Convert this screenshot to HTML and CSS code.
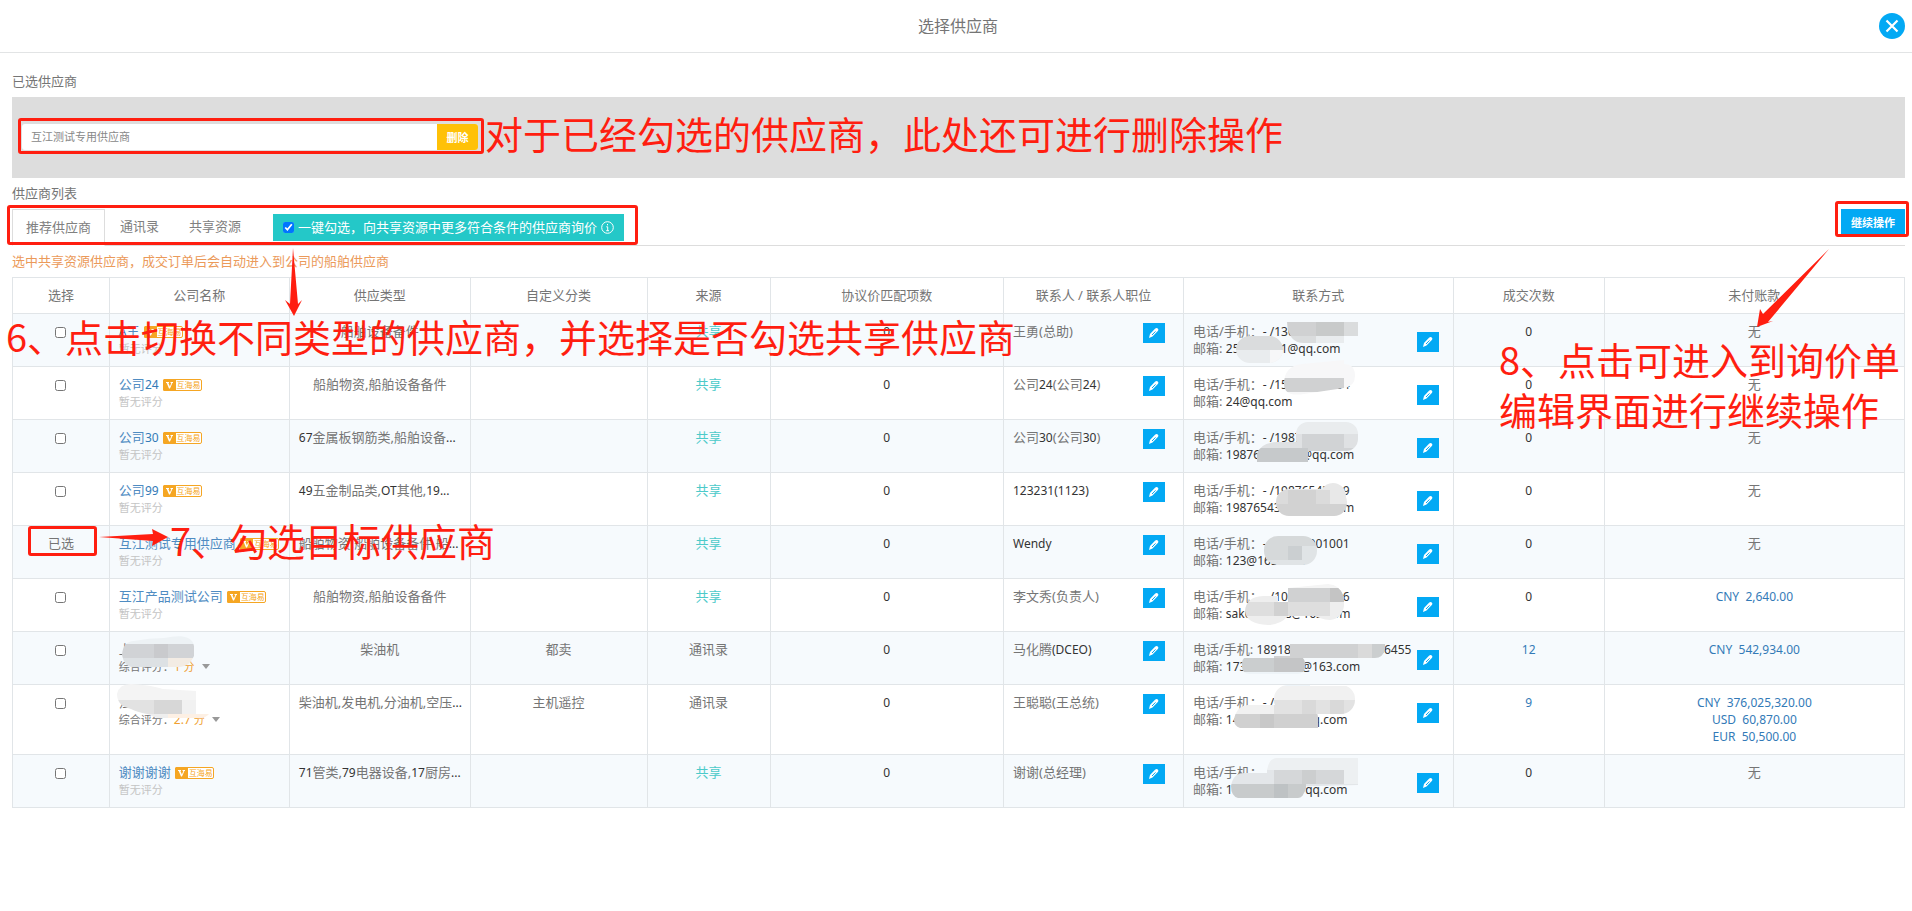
FILE: index.html
```html
<!DOCTYPE html>
<html lang="zh-CN">
<head>
<meta charset="utf-8">
<title>选择供应商</title>
<link rel="stylesheet" href="styles.css">
</head>
<body>
<svg class="defs" width="0" height="0" aria-hidden="true">
  <symbol id="pen" viewBox="0 0 12 12">
    <path d="M1 11l1-4 5-5.300c1-1 2-1 2.800-.2s.8 1.800-.2 2.800L4.500 9.600z" fill="#fff"/>
    <path d="M4 8l3.500-3.600" stroke="#03a9f4" stroke-width="1"/>
  </symbol>
  <symbol id="badge" viewBox="0 0 39 12">
    <rect x=".5" y=".5" width="38" height="11" rx="1.500" fill="#fff" stroke="#f5a623"/>
    <path d="M0 1.500Q0 0 1.500 0H13v12H1.500Q0 12 0 10.500z" fill="#f5a623"/>
    <path d="M3 3h3v1h-.6l1.500 3.600L8.300 4h-.8V3H10v1h-.6L7 9.500H6L3.700 4H3z" fill="#fff"/>
  </symbol>
</svg>
<div class="page">
  <header class="top">
    <h1>选择供应商</h1>
    <button class="close" aria-label="关闭"><svg width="14" height="14" viewBox="0 0 14 14"><path d="M1.500 1.500l11 11M12.500 1.500l-11 11" stroke="#fff" stroke-width="2.200"/></svg></button>
  </header>
  <main>
    <h2>已选供应商</h2>
    <section class="chosen">
      <div class="chosen-item"><span>互江测试专用供应商</span><button>删除</button></div>
    </section>
    <h2>供应商列表</h2>
    <nav class="tabs">
      <a class="tab active" href="#t1">推荐供应商</a>
      <a class="tab" href="#t2">通讯录</a>
      <a class="tab" href="#t3">共享资源</a>
      <label class="quick"><input type="checkbox" checked><span>一键勾选，向共享资源中更多符合条件的供应商询价</span>
        <svg width="13" height="13" viewBox="0 0 13 13"><circle cx="6.500" cy="6.500" r="5.800" fill="none" stroke="#fff"/><path d="M6.500 3v1.300M5.300 5.800h1.400v4M5.200 9.700h2.800" stroke="#fff" fill="none"/></svg>
      </label>
      <button class="continue">继续操作</button>
    </nav>
    <p class="hint">选中共享资源供应商，成交订单后会自动进入到公司的船舶供应商</p>
    <table>
      <colgroup><col class="c1"><col class="c2"><col class="c3"><col class="c4"><col class="c5"><col class="c6"><col class="c7"><col class="c8"><col class="c9"><col class="c10"></colgroup>
      <thead><tr><th>选择</th><th>公司名称</th><th>供应类型</th><th>自定义分类</th><th>来源</th><th>协议价匹配项数</th><th>联系人 / 联系人职位</th><th>联系方式</th><th>成交次数</th><th>未付账款</th></tr></thead>
      <tbody>
      <tr><td><input type="checkbox" aria-label="选择 A王"></td>
        <td class="l"><div class="name"><a href="#c1"><b>A</b>王</a><span class="badge"><svg><use href="#badge"/></svg><i>互海易</i></span></div><div class="rate">暂无评分</div></td>
        <td>船舶设备备件</td><td></td><td class="share">共享</td><td><b>0</b></td>
        <td class="l"><div class="cell">王勇(总助)<button class="edit" aria-label="编辑联系人"><svg><use href="#pen"/></svg></button></div></td>
        <td class="l"><div class="cell"><div>电话/手机：<b>- /13000000000</b><br>邮箱: <b>250000001@qq.com</b></div><button class="edit low" aria-label="编辑联系方式"><svg><use href="#pen"/></svg></button></div></td>
        <td><b>0</b></td><td>无</td></tr>
      <tr><td><input type="checkbox" aria-label="选择 公司24"></td>
        <td class="l"><div class="name"><a href="#c2">公司<b>24</b></a><span class="badge"><svg><use href="#badge"/></svg><i>互海易</i></span></div><div class="rate">暂无评分</div></td>
        <td>船舶物资,船舶设备备件</td><td></td><td class="share">共享</td><td><b>0</b></td>
        <td class="l"><div class="cell"><span>公司<b>24</b>(公司<b>24</b>)</span><button class="edit" aria-label="编辑联系人"><svg><use href="#pen"/></svg></button></div></td>
        <td class="l"><div class="cell"><div>电话/手机：<b>- /15000000004</b><br>邮箱: <b>24@qq.com</b></div><button class="edit low" aria-label="编辑联系方式"><svg><use href="#pen"/></svg></button></div></td>
        <td><b>0</b></td><td>无</td></tr>
      <tr><td><input type="checkbox" aria-label="选择 公司30"></td>
        <td class="l"><div class="name"><a href="#c3">公司<b>30</b></a><span class="badge"><svg><use href="#badge"/></svg><i>互海易</i></span></div><div class="rate">暂无评分</div></td>
        <td class="l"><b>67</b>金属板钢筋类,船舶设备<b>...</b></td><td></td><td class="share">共享</td><td><b>0</b></td>
        <td class="l"><div class="cell"><span>公司<b>30</b>(公司<b>30</b>)</span><button class="edit" aria-label="编辑联系人"><svg><use href="#pen"/></svg></button></div></td>
        <td class="l"><div class="cell"><div>电话/手机：<b>- /19870000000</b><br>邮箱: <b>19876000000@qq.com</b></div><button class="edit low" aria-label="编辑联系方式"><svg><use href="#pen"/></svg></button></div></td>
        <td><b>0</b></td><td>无</td></tr>
      <tr><td><input type="checkbox" aria-label="选择 公司99"></td>
        <td class="l"><div class="name"><a href="#c4">公司<b>99</b></a><span class="badge"><svg><use href="#badge"/></svg><i>互海易</i></span></div><div class="rate">暂无评分</div></td>
        <td class="l"><b>49</b>五金制品类,<b>OT</b>其他,<b>19...</b></td><td></td><td class="share">共享</td><td><b>0</b></td>
        <td class="l"><div class="cell"><b>123231(1123)</b><button class="edit" aria-label="编辑联系人"><svg><use href="#pen"/></svg></button></div></td>
        <td class="l"><div class="cell"><div>电话/手机：<b>- /19876543219</b><br>邮箱: <b>19876543000@qq.com</b></div><button class="edit low" aria-label="编辑联系方式"><svg><use href="#pen"/></svg></button></div></td>
        <td><b>0</b></td><td>无</td></tr>
      <tr><td>已选</td>
        <td class="l"><div class="name"><a href="#c5">互江测试专用供应商</a><span class="badge"><svg><use href="#badge"/></svg><i>互海易</i></span></div><div class="rate">暂无评分</div></td>
        <td class="l">船舶物资,船舶设备备件,船<b>...</b></td><td></td><td class="share">共享</td><td><b>0</b></td>
        <td class="l"><div class="cell"><b>Wendy</b><button class="edit" aria-label="编辑联系人"><svg><use href="#pen"/></svg></button></div></td>
        <td class="l"><div class="cell"><div>电话/手机：<b>- /00000001001</b><br>邮箱: <b>123@163.com</b></div><button class="edit low" aria-label="编辑联系方式"><svg><use href="#pen"/></svg></button></div></td>
        <td><b>0</b></td><td>无</td></tr>
      <tr><td><input type="checkbox" aria-label="选择 互江产品测试公司"></td>
        <td class="l"><div class="name"><a href="#c6">互江产品测试公司</a><span class="badge"><svg><use href="#badge"/></svg><i>互海易</i></span></div><div class="rate">暂无评分</div></td>
        <td>船舶物资,船舶设备备件</td><td></td><td class="share">共享</td><td><b>0</b></td>
        <td class="l"><div class="cell">李文秀(负责人)<button class="edit" aria-label="编辑联系人"><svg><use href="#pen"/></svg></button></div></td>
        <td class="l"><div class="cell"><div>电话/手机：<b>- /10000000006</b><br>邮箱: <b>sak000000s@163.com</b></div><button class="edit low" aria-label="编辑联系方式"><svg><use href="#pen"/></svg></button></div></td>
        <td><b>0</b></td><td><a href="#p6"><b>CNY&nbsp; 2,640.00</b></a></td></tr>
      <tr><td><input type="checkbox" aria-label="选择供应商"></td>
        <td class="l"><div class="name">上海</div><div class="score">综合评分：<em><b>1</b> 分</em><s></s></div></td>
        <td>柴油机</td><td>都卖</td><td>通讯录</td><td><b>0</b></td>
        <td class="l"><div class="cell"><span>马化腾<b>(DCEO)</b></span><button class="edit" aria-label="编辑联系人"><svg><use href="#pen"/></svg></button></div></td>
        <td class="l"><div class="cell"><div>电话/手机: <b>18918000000 / 0000006455</b><br>邮箱: <b>17300000000@163.com</b></div><button class="edit low" aria-label="编辑联系方式"><svg><use href="#pen"/></svg></button></div></td>
        <td><a href="#n7"><b>12</b></a></td><td><a href="#p7"><b>CNY&nbsp; 542,934.00</b></a></td></tr>
      <tr><td><input type="checkbox" aria-label="选择供应商"></td>
        <td class="l"><div class="name">江</div><div class="score">综合评分：<em><b>2.7</b> 分</em><s></s></div></td>
        <td class="l">柴油机,发电机,分油机,空压<b>...</b></td><td>主机遥控</td><td>通讯录</td><td><b>0</b></td>
        <td class="l"><div class="cell">王聪聪(王总统)<button class="edit" aria-label="编辑联系人"><svg><use href="#pen"/></svg></button></div></td>
        <td class="l"><div class="cell"><div>电话/手机：<b>- /10000000000</b><br>邮箱: <b>1400000000@qq.com</b></div><button class="edit low" aria-label="编辑联系方式"><svg><use href="#pen"/></svg></button></div></td>
        <td><a href="#n8"><b>9</b></a></td><td><a href="#p8"><b>CNY&nbsp; 376,025,320.00<br>USD&nbsp; 60,870.00<br>EUR&nbsp; 50,500.00</b></a></td></tr>
      <tr><td><input type="checkbox" aria-label="选择 谢谢谢谢"></td>
        <td class="l"><div class="name"><a href="#c9">谢谢谢谢</a><span class="badge"><svg><use href="#badge"/></svg><i>互海易</i></span></div><div class="rate">暂无评分</div></td>
        <td class="l"><b>71</b>管类,<b>79</b>电器设备,<b>17</b>厨房<b>...</b></td><td></td><td class="share">共享</td><td><b>0</b></td>
        <td class="l"><div class="cell">谢谢(总经理)<button class="edit" aria-label="编辑联系人"><svg><use href="#pen"/></svg></button></div></td>
        <td class="l"><div class="cell"><div>电话/手机：<b>- /10000000000</b><br>邮箱: <b>1000000000@qq.com</b></div><button class="edit low" aria-label="编辑联系方式"><svg><use href="#pen"/></svg></button></div></td>
        <td><b>0</b></td><td>无</td></tr>
      </tbody>
    </table>
  </main>

  <svg class="layer" width="1912" height="911" aria-hidden="true">
    <!-- pixelated patches over private data, on a 14px grid -->
    <clipPath id="patches">
      <path d="M1287 322h71v14h-14v7h-40q-16 0-17-21z"/>
      <rect x="1236" y="336" width="47" height="27" rx="14"/>
      <path d="M1284 384q0-18 18-20l42-4v4q11 0 11 12 0 10-11 12l-40 6q-20 3-20-10z"/>
      <rect x="1296" y="422" width="62" height="29" rx="12"/>
      <path d="M1257 462v-8q3-11 20-12h31v20z"/>
      <rect x="1276" y="489" width="71" height="27" rx="13"/><circle cx="1333" cy="496" r="13"/>
      <rect x="1264" y="536" width="53" height="29" rx="14"/>
      <path d="M1278 602q0-12 10-14l40-4q15 1 16 18v2z"/>
      <path d="M1245 611q1-14 18-15h81v10q-2 13-14 14-10-1-14-4h-28q-8 9-20 9-22-1-23-14z"/>
      <path d="M1290 643h95v6q-2 9-10 9h-85z"/><rect x="1242" y="656" width="63" height="18" rx="7"/>
      <rect x="1274" y="685" width="81" height="29" rx="14"/><path d="M1234 720q2-14 14-15h50q19 1 20 12v11h-78q-6-2-6-8z"/>
      <path d="M1267 787v-17q2-12 10-12h81v27z"/><path d="M1231 786q2-13 14-13h61v15q-3 10-8 10h-60q-7-2-7-12z"/>
      <path d="M122 655q1-14 12-14 15-3 30-3 28-6 30 8v10q-4 10-14 11h-48q-8-1-10-12z"/>
      <path d="M117 694q2-10 14-10 20 1 32 5l33 2v23h13q-4 5-12 4h-40l-10-4q-10-2-16-5-14-3-14-15z"/>
    </clipPath>
    <g clip-path="url(#patches)" fill="none" stroke-width="14">
      <path d="M1280 329h80M1274 385h70M1288 595h60M1274 651h84" stroke="#d0d1d2"/>
      <path d="M1316 329h28" stroke="#c8caca"/><path d="M1344 329h14M1288 343h28M1232 343h56" stroke="#dadcdd"/>
      <path d="M1316 343h30M1232 357h56M1270 427h90" stroke="#e9ecee"/>
      <path d="M1270 357h90M1270 371h90M1344 385h14M1274 399h80" stroke="#f7f7f8"/>
      <path d="M1246 441h60M1344 441h16" stroke="#dfe1e3"/><path d="M1302 441h42M1302 455h60" stroke="#d1d3d5"/>
      <path d="M1246 455h62" stroke="#c6c9cb"/>
      <path d="M1274 483h80M1330 497h20" stroke="#e8e8e8"/><path d="M1274 497h56" stroke="#dbdbdb"/><path d="M1288 497h28M1274 511h80" stroke="#d2d2d2"/>
      <path d="M1260 539h60M1260 553h28" stroke="#d6d9da"/><path d="M1288 553h14" stroke="#cbcfd1"/><path d="M1302 553h20M1260 567h60" stroke="#e0e4e6"/>
      <path d="M1270 581h80" stroke="#f5f5f5"/><path d="M1330 595h14" stroke="#c4c4c4"/>
      <path d="M1240 595h38M1330 609h16M1240 623h110" stroke="#eeeeee"/><path d="M1240 609h90" stroke="#dedede"/><path d="M1274 609h14" stroke="#d1d1d1"/>
      <path d="M1358 651h30M1240 665h62" stroke="#cbcecf"/><path d="M1274 665h34" stroke="#c4c5c6"/><path d="M1358 651h14" stroke="#dadada"/>
      <path d="M1240 679h70" stroke="#eef4f8"/>
      <path d="M1230 693h130M1230 707h44" stroke="#f1f1f1"/><path d="M1274 707h90" stroke="#e2e2e2"/><path d="M1302 707h14M1330 707h14" stroke="#d9d9d9"/>
      <path d="M1232 721h90" stroke="#d0d0d0"/><path d="M1260 721h14" stroke="#c8c8c8"/>
      <path d="M1230 763h130M1344 777h16" stroke="#edf0f2"/><path d="M1230 777h44M1302 791h60" stroke="#e3e6e9"/><path d="M1274 777h70" stroke="#d5d7d9"/><path d="M1302 777h14" stroke="#cccecf"/>
      <path d="M1230 791h76" stroke="#c8cbcc"/><path d="M1274 791h14" stroke="#bec2c4"/>
      <path d="M112 637h90" stroke="#edf2f5"/><path d="M112 651h84" stroke="#d1d3d6"/><path d="M154 651h14" stroke="#c9cacd"/>
      <path d="M112 665h56" stroke="#dde1e4"/><path d="M168 665h30" stroke="#f3ece4"/>
      <path d="M112 679h90M112 693h90" stroke="#f4f4f4"/><path d="M112 707h56" stroke="#e2e2e2"/><path d="M154 707h28" stroke="#d7d7d7"/><path d="M182 707h14" stroke="#f1f1f1"/><path d="M112 721h56" stroke="#eee"/><path d="M168 721h42" stroke="#fdf0e4"/>
    </g>
    <g fill="#ff1e10">
      <path d="M293 248l5 56 4-4-8 16-9-16 5 4z"/>
      <path d="M99 537l54-3-1-5 16 8-16 9 1-5z"/>
      <path d="M1829 249l-61 73 5-1-16 6 3-18 3 5z"/>
    </g>
  </svg>
  <div class="mark m1"></div><div class="mark m2"></div><div class="mark m3"></div><div class="mark m4"></div>
  <p class="note n1">对于已经勾选的供应商，此处还可进行删除操作</p>
  <p class="note n2">6、点击切换不同类型的供应商，并选择是否勾选共享供应商</p>
  <p class="note n3">7、勾选目标供应商</p>
  <p class="note n4">8、点击可进入到询价单<br>编辑界面进行继续操作</p>
</div>
</body>
</html>
```
FILE: styles.css
```css
* { box-sizing: border-box; }
body {
  margin: 0;
  background: #fff;
  color: #757575;
  font: 13px/17px "Noto Sans", "Noto Sans CJK SC", sans-serif;
}
.page { position: relative; min-height: 100vh; overflow: hidden; }
.defs { position: absolute; }
h1, h2, p { margin: 0; font-weight: normal; }
a { color: #4f8cc2; text-decoration: none; }
button { border: 0; padding: 0; font: inherit; color: #fff; cursor: pointer; }
input { width: 11px; height: 11px; margin: 0; }
b { font-size: 12px; font-weight: normal; color: #333; }
a b { color: #337ab7; }
em b { color: inherit; }

.top {
  display: flex;
  align-items: center;
  justify-content: flex-end;
  height: 53px;
  padding: 0 7px;
  border-bottom: 1px solid #e2e4e5;
}
.top h1 { flex: 1; padding-left: 30px; text-align: center; font-size: 16px; line-height: 24px; }
.close {
  display: grid;
  place-items: center;
  width: 26px;
  height: 26px;
  border-radius: 50%;
  background: #03a9f4;
}

main { padding: 19px 7px 20px 12px; }
h2 { font-size: 13px; line-height: 18px; }
.chosen { margin: 7px 0 6px; padding: 27px 10px 28px; background: #ddd; }
.chosen-item {
  display: flex;
  align-items: stretch;
  width: 456px;
  height: 26px;
  background: #fff;
  font-size: 11px;
  border-radius: 3px;
}
.chosen-item span { flex: 1; padding-left: 9px; line-height: 26px; color: #888; }
.chosen-item button { width: 41px; background: #ffc107; border-radius: 0 3px 3px 0; font-weight: bold; }

.tabs { display: flex; align-items: flex-start; height: 37px; margin-top: 7px; border-bottom: 1px solid #ddd; }
.tab { padding: 9px 15px 11px; color: #808080; }
.tab.active { height: 37px; padding: 9px 13px; border: 1px solid #ddd; border-bottom-color: #fff; }
.quick {
  display: flex;
  align-items: center;
  gap: 4px;
  height: 27px;
  margin: 5px auto 0 17px;
  padding: 0 10px;
  background: #24c8c8;
  color: #fff;
}
.continue { width: 64px; height: 27px; background: #03a9f4; font-size: 11px; font-weight: bold; }
.hint { margin: 6px 0 7px; line-height: 18px; color: #eb9a5a; }

table { width: 100%; table-layout: fixed; border-collapse: collapse; }
.c1 { width: 5.12%; } .c2 { width: 9.51%; } .c3 { width: 9.56%; } .c4 { width: 9.35%; } .c5 { width: 6.5%; }
.c6 { width: 12.34%; } .c7 { width: 9.51%; } .c8 { width: 14.26%; } .c9 { width: 7.98%; } .c10 { width: 15.87%; }
th, td { border: 1px solid #e1e5e8; text-align: center; vertical-align: top; font-weight: normal; white-space: nowrap; }
th { padding: 9px 0; }
td { height: 53px; padding: 9px 0; }
td.l { padding-left: 9px; text-align: left; }
tbody tr:nth-child(odd) { background: #f6fafd; }
td input { margin-top: 4px; }
.share { color: #4ccaca; }
.name { display: flex; align-items: center; gap: 4px; height: 17px; }
.badge { position: relative; width: 39px; height: 12px; }
.badge svg { display: block; width: 39px; height: 12px; }
.badge i { position: absolute; left: 14px; top: 0; font-size: 8px; line-height: 12px; font-style: normal; color: #f5a623; }
.rate { font-size: 11px; color: #c4c4c4; }
.score { display: flex; align-items: center; font-size: 11px; }
.score em { font-style: normal; color: #f0a030; }
.score s { margin-left: 7px; border: 4px solid transparent; border-top: 5px solid #999; border-bottom: 0; }
.cell { display: flex; justify-content: space-between; align-items: flex-start; height: 34px; padding-right: 18px; }
.edit { display: grid; place-items: center; flex: none; width: 22px; height: 20px; background: #03a9f4; }
.edit svg { width: 12px; height: 12px; }
.cell:has(.low) { padding-right: 14px; }
.low { margin-top: 9px; }

.layer { position: absolute; left: 0; top: 0; pointer-events: none; }
.mark { position: absolute; border: 3px solid #ff1e10; border-radius: 3px; pointer-events: none; }
.m1 { left: 18px; top: 118px; width: 466px; height: 36px; }
.m2 { left: 7px; top: 205px; width: 631px; height: 40px; }
.m3 { right: 3px; top: 201px; width: 74px; height: 36px; }
.m4 { left: 28px; top: 526px; width: 69px; height: 30px; }
.note { position: absolute; color: #ff1e10; font: 38px/50px "Noto Sans CJK SC", sans-serif; white-space: nowrap; pointer-events: none; }
.n1 { left: 485px; top: 108px; }
.n2 { left: 6px; top: 311px; }
.n3 { left: 170px; top: 515px; }
.n4 { left: 1499px; top: 334px; }
```
